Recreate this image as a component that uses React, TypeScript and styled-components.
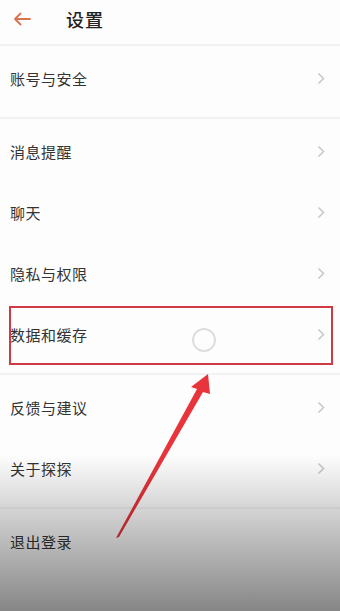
import React from 'react';
import styled, { createGlobalStyle } from 'styled-components';

const GlobalStyle = createGlobalStyle`
  html, body {
    margin: 0;
    padding: 0;
    background: #fdfdfd;
  }
  body {
    font-family: "Noto Sans CJK SC", "Noto Sans", sans-serif;
  }
`;

interface TRow {
  label: string;
  arrow: boolean;
}

const groups: TRow[][] = [
  [{ label: '账号与安全', arrow: true }],
  [
    { label: '消息提醒', arrow: true },
    { label: '聊天', arrow: true },
    { label: '隐私与权限', arrow: true },
    { label: '数据和缓存', arrow: true },
  ],
  [
    { label: '反馈与建议', arrow: true },
    { label: '关于探探', arrow: true },
  ],
  [{ label: '退出登录', arrow: false }],
];

const Chevron = () => (
  <svg width="8" height="13" viewBox="0 0 8 13">
    <path d="M1.5 1.5 L6.5 6.5 L1.5 11.5" fill="none" stroke="#c9c9c9" strokeWidth="1.6" />
  </svg>
);

const BackArrow = () => (
  <svg width="18" height="14" viewBox="0 0 18 14">
    <path
      d="M17 7 H2 M7.5 1.5 L2 7 L7.5 12.5"
      fill="none"
      stroke="#d9724f"
      strokeWidth="1.8"
      strokeLinecap="round"
      strokeLinejoin="round"
    />
  </svg>
);

export default function App() {
  return (
    <>
      <GlobalStyle />
      <Page>
        <Header>
          <BackButton>
            <BackArrow />
          </BackButton>
          <Title>设置</Title>
        </Header>
        {groups.map((group, gi) => (
          <Group key={gi} last={gi === groups.length - 1}>
            {group.map((row) => (
              <Row key={row.label}>
                <Label>{row.label}</Label>
                {row.arrow && <Chevron />}
              </Row>
            ))}
          </Group>
        ))}

        <Highlight />
        <Annotation viewBox="0 0 340 611" width="340" height="611">
          <circle cx="204" cy="340" r="11" fill="none" stroke="#dedede" strokeWidth="2" />
          <polygon
            points="208,374 191,387 197,389 116,538 119,537 203,392 210,394"
            fill="#e8343b"
          />
        </Annotation>
        <Shade />
      </Page>
    </>
  );
}

const Page = styled.div`
  position: relative;
  width: 340px;
  height: 611px;
  overflow: hidden;
  background: #fdfdfd;
`;

const Header = styled.div`
  height: 44px;
  display: flex;
  align-items: center;
  border-bottom: 2px solid #f1f1f1;
`;

const BackButton = styled.div`
  width: 66px;
  padding-left: 13px;
  box-sizing: border-box;
  display: flex;
  align-items: center;
  margin-top: -6px;
`;

const Title = styled.div`
  font-size: 18px;
  font-weight: 500;
  color: #222;
  margin-top: -6px;
  letter-spacing: 1px;
`;

const Group = styled.div<{ last: boolean }>`
  padding: 2px 0 8px;
  border-bottom: ${({ last }) => (last ? 'none' : '2px solid #f2f2f2')};
`;

const Row = styled.div`
  height: 61px;
  display: flex;
  align-items: center;
  justify-content: space-between;
  padding: 0 15px 0 10px;
`;

const Label = styled.span`
  font-size: 15px;
  color: #333;
  letter-spacing: 0.5px;
`;

const Highlight = styled.div`
  position: absolute;
  left: 9px;
  top: 306px;
  width: 324px;
  height: 59px;
  box-sizing: border-box;
  border: 2px solid #cf3a44;
`;

const Annotation = styled.svg`
  position: absolute;
  left: 0;
  top: 0;
  pointer-events: none;
`;

const Shade = styled.div`
  position: absolute;
  left: 0;
  right: 0;
  top: 455px;
  bottom: 0;
  background: linear-gradient(to bottom, rgba(0, 0, 0, 0), rgba(0, 0, 0, 0.47));
  pointer-events: none;
`;
